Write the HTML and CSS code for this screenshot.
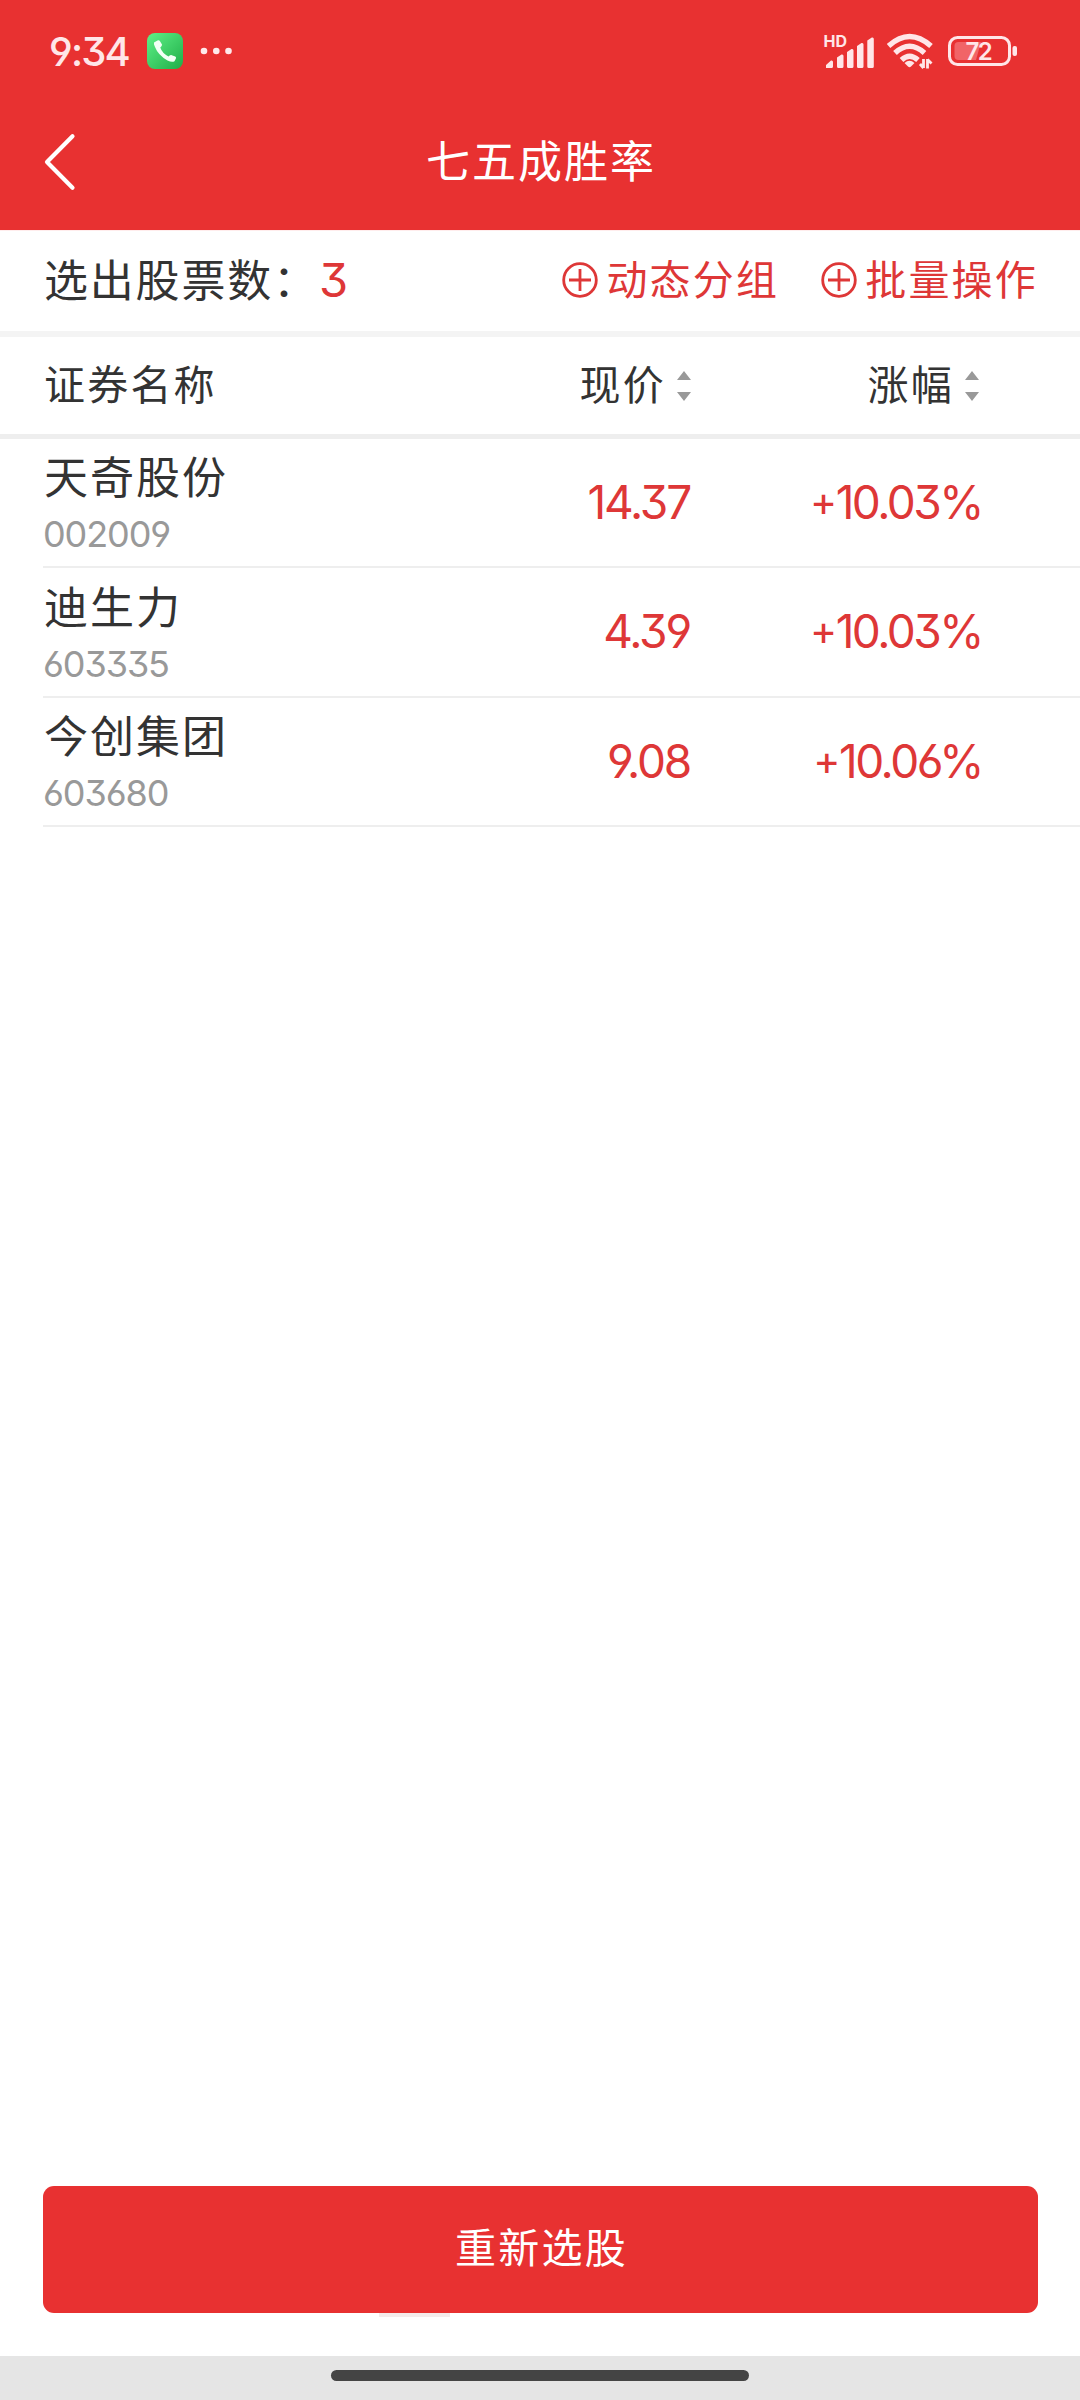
FILE: index.html
```html
<!DOCTYPE html>
<html lang="zh-CN">
<head>
<meta charset="utf-8">
<title>七五成胜率</title>
<link rel="stylesheet" href="styles.css">
</head>
<body>
<div class="screen">
  <header class="top">
    <div class="status">
      <span class="clock">9:34</span>
      <svg class="phone" width="36" height="36" viewBox="0 0 36 36">
        <defs><linearGradient id="g" x1="0" y1="0" x2="1" y2="1"><stop offset="0" stop-color="#5ff087"/><stop offset="1" stop-color="#1fae48"/></linearGradient></defs>
        <rect width="36" height="36" rx="8" fill="url(#g)"/>
        <path d="M7 9.500L10.500 7.500Q12 6.500 13 8.200L15 11.500Q15.200 12.800 13.300 14.500Q15 20 21.500 23.500Q23.500 21.800 24.800 22.200L28.300 23.500Q29.500 24.300 28.900 25.500L27.500 28.200Q25 29.500 20.500 27.500Q11 22 8 14Q6.500 11 7 9.500Z" fill="#f2fff5"/>
      </svg>
      <svg class="dots" width="32" height="8" viewBox="0 0 32 8" fill="#ffe9ea"><circle cx="4" cy="4" r="3.300"/><circle cx="16.300" cy="4" r="3.300"/><circle cx="28.500" cy="4" r="3.300"/></svg>
      <div class="signals">
        <svg width="51" height="38" viewBox="-1 -2 51 38" fill="#ffe6e8">
          <text class="hd" x="-0.500" y="13">HD</text>
          <path d="M2 34V31L7 26.500Q9 26 9 28V32.500Q9 34 7.500 34H3.500Q2 34 2 34ZM13 32.500V23.500L17.500 20.500Q19.500 20 19.500 22V32.500Q19.500 34 18 34H14.500Q13 34 13 32.500ZM23 32.500V18L27.500 15Q29.500 14.500 29.500 16.500V32.500Q29.500 34 28 34H24.500Q23 34 23 32.500ZM33 32.500V12L37.500 9Q39.500 8.500 39.500 10.500V32.500Q39.500 34 38 34H34.500Q33 34 33 32.500ZM43.300 32.500V6.500L47.800 3.500Q49.800 3 49.800 5V32.500Q49.800 34 48.300 34H44.800Q43.300 34 43.300 32.500Z"/>
        </svg>
        <svg width="48" height="37" viewBox="1 0 48 37" fill="none" stroke="#ffe6e8" stroke-width="5.400">
          <path d="M2.500 13Q23.500 -6 45 13M9 20Q23.500 6.500 38.500 20M15.500 27Q23.500 19.500 32 27"/>
          <path d="M18.500 30Q23.500 25.500 28.500 30L25 33.500Q23.500 35 22 33.500Z" fill="#ffe6e8" stroke="none"/>
          <path d="M37.500 26V35M34 31L37.500 35M41.500 35.500V26M41.500 26.500L45.500 30.500" stroke-width="2.800"/>
        </svg>
        <svg width="70" height="30" viewBox="0 0 70 30">
          <rect x="1.500" y="1.500" width="60" height="27" rx="8" fill="none" stroke="#ffe6e8" stroke-width="3"/>
          <path d="M10.500 6H33L28 24H10.500Q6.500 24 6.500 20V10Q6.500 6 10.500 6Z" fill="#f16467"/>
          <rect x="64.500" y="10" width="4.500" height="10" rx="2" fill="#ffe6e8"/>
          <text class="level" x="17.500" y="24">72</text>
        </svg>
      </div>
    </div>
    <div class="nav">
      <svg class="back" width="36" height="60" viewBox="0 0 36 60" fill="none" stroke="#fff" stroke-width="4.200" stroke-linecap="round" stroke-linejoin="round"><path d="M28.500 4.300L3 30L28.500 55.700"/></svg>
      <h1>七五成胜率</h1>
    </div>
  </header>
  <section class="summary">
    <span class="label">选出股票数：</span><span class="count">3</span>
    <div class="actions">
      <span class="action"><svg width="36" height="36" viewBox="0 0 36 36" fill="none" stroke="#de3737" stroke-width="2.800"><circle cx="18" cy="18" r="16.300"/><path d="M7 18H29M18 7V29"/></svg><span>动态分组</span></span>
      <span class="action"><svg width="36" height="36" viewBox="0 0 36 36" fill="none" stroke="#de3737" stroke-width="2.800"><circle cx="18" cy="18" r="16.300"/><path d="M7 18H29M18 7V29"/></svg><span>批量操作</span></span>
    </div>
  </section>
  <section class="heads">
    <span class="head">证券名称</span>
    <span class="sort"><span class="head">现价</span><svg width="14" height="30" viewBox="0 0 14 30" fill="#999"><path d="M7 0L14 9H0ZM0 21H14L7 30Z"/></svg></span>
    <span class="sort"><span class="head">涨幅</span><svg width="14" height="30" viewBox="0 0 14 30" fill="#999"><path d="M7 0L14 9H0ZM0 21H14L7 30Z"/></svg></span>
  </section>
  <main class="list">
    <div class="row"><div><div class="name">天奇股份</div><div class="code">002009</div></div><span class="num price">14.37</span><span class="num"><span class="plus">+</span>10.03%</span></div>
    <div class="row tall"><div><div class="name">迪生力</div><div class="code">603335</div></div><span class="num price">4.39</span><span class="num"><span class="plus">+</span>10.03%</span></div>
    <div class="row"><div><div class="name">今创集团</div><div class="code">603680</div></div><span class="num price">9.08</span><span class="num"><span class="plus">+</span>10.06%</span></div>
  </main>
  <div class="footer"><button class="again">重新选股</button></div>
  <div class="gesture"><div class="pill"></div></div>
</div>
</body>
</html>
```
FILE: styles.css
```css
* { box-sizing: border-box; }
body { margin: 0; font-family: "Noto Sans CJK SC", sans-serif; color: #333; }
.screen { width: 1080px; height: 2400px; display: flex; flex-direction: column; background: #fff; }
.top { height: 230px; background: #e83131; color: #fff; flex: none; }
.status { height: 102px; display: flex; align-items: center; padding: 0 62px 0 49px; }
.clock { width: 98px; padding-top: 1px; font: 500 40px/50px Inter, sans-serif; letter-spacing: -1.800px; color: #ffe6e8; font-feature-settings: "cv03", "cv04", "cv09"; }
.dots { margin-left: 17px; }
.signals { margin-left: auto; display: flex; align-items: center; gap: 13px; }
.hd { font: 700 16px Inter, sans-serif; }
.level { font: 600 24px Inter, sans-serif; letter-spacing: -1.500px; fill: #ffe6e8; }
.nav { height: 120px; display: grid; grid-template-columns: 200px 1fr 200px; align-items: center; }
.back { margin-left: 44px; }
h1 { margin: 0; padding: 0 0 6px 2px; font-size: 44px; line-height: 64px; font-weight: 400; letter-spacing: 2px; text-align: center; }
.summary { height: 107px; border-top: 1px solid #ffeded; border-bottom: 6px solid #f4f4f4; display: flex; align-items: center; padding: 0 42px 0 44px; flex: none; }
.label { width: 275px; padding-bottom: 7px; font-size: 44px; line-height: 64px; letter-spacing: 1.800px; white-space: nowrap; }
.count { padding-bottom: 2px; font: 400 47px/60px Inter, sans-serif; font-feature-settings: "cv09"; color: #de3737; }
.actions { margin-left: auto; display: flex; gap: 42px; }
.action { display: flex; align-items: center; gap: 8px; padding-bottom: 2px; font-size: 41px; line-height: 60px; letter-spacing: 2.200px; color: #de3737; }
.action span { padding-bottom: 6px; }
.heads { height: 102px; border-bottom: 5px solid #eee; padding: 0 101px 0 44px; display: grid; grid-template-columns: 1fr 300px 288px; align-items: center; font-size: 41px; line-height: 60px; letter-spacing: 2.200px; flex: none; }
.head { padding-bottom: 8px; }
.sort { display: flex; justify-content: flex-end; align-items: center; gap: 11px; }
.list { flex: 1; }
.row { height: 129px; margin-left: 43px; padding: 0 98px 2px 0; border-bottom: 2px solid #eee; display: grid; grid-template-columns: 1fr 300px 290px; align-items: center; }
.tall { height: 130px; }
.name { margin-top: -2px; padding: 0 0 3px 1px; font-size: 44px; line-height: 64px; letter-spacing: 2px; }
.code { font: 400 36px/48px Inter, sans-serif; letter-spacing: -1.100px; color: #999; font-feature-settings: "cv03", "cv04", "cv09"; }
.num { font: 400 46px/60px Inter, sans-serif; letter-spacing: -2.500px; color: #de3737; text-align: right; font-feature-settings: "cv03", "cv04", "cv09"; }
.price { padding-right: 2px; letter-spacing: -2.200px; }
.plus { font-size: 41px; vertical-align: 3px; line-height: 1; letter-spacing: -1.500px; }
.footer { padding: 0 42px 43px 43px; background: linear-gradient(#f4ebeb, #f4ebeb) 379px 127px / 71px 4px no-repeat; }
.again { display: block; width: 100%; height: 127px; padding: 0 0 9px 2px; border: 0; border-radius: 11px; background: #e83131; color: #fff; font: 400 41px "Noto Sans CJK SC", sans-serif; letter-spacing: 2.200px; }
.gesture { height: 44px; background: #e5e5e5; padding-top: 14px; flex: none; }
.pill { width: 418px; height: 11px; margin: 0 auto; border-radius: 6px; background: #444; }
```
